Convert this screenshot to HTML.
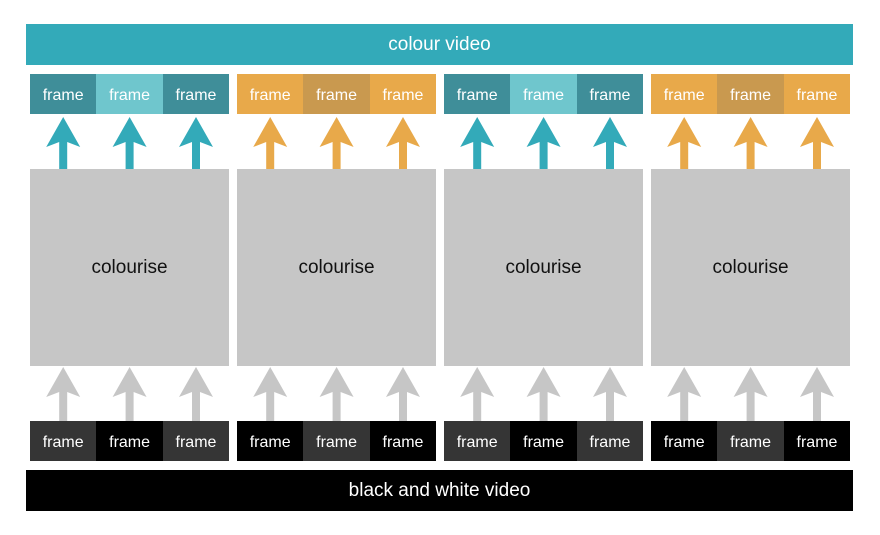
<!DOCTYPE html>
<html><head><style>
*{margin:0;padding:0;box-sizing:border-box}
body{width:880px;height:535px;background:#fff;position:relative;font-family:"Liberation Sans",sans-serif;overflow:hidden}
.bar{position:absolute;left:26px;width:827px;height:41px;color:#fff;font-size:19px;display:flex;align-items:center;justify-content:center}
.f{position:absolute;height:40px;width:66.4px;color:#fff;font-size:16px;display:flex;align-items:center;justify-content:center;padding-top:3px}
.box{position:absolute;top:169px;height:197px;width:199px;background:#c6c6c6;color:#111;font-size:19px;display:flex;align-items:center;justify-content:center}
svg{position:absolute;left:0;top:0}
</style></head><body>
<div class="bar" style="top:24px;background:#33aab9">colour video</div>
<div class="bar" style="top:470px;background:#000">black and white video</div>
<div id="c"></div>
<svg width="880" height="535" id="s"></svg>
<script>
(function(){
var g=[30,237,444,651];
var tc=[["#3f8e99","#6fc6cd","#3f8e99"],["#e8a94a","#c9994f","#e8a94a"],["#3f8e99","#6fc6cd","#3f8e99"],["#e8a94a","#c9994f","#e8a94a"]];
var bc=[["#353535","#000","#353535"],["#000","#353535","#000"],["#353535","#000","#353535"],["#000","#353535","#000"]];
var ac=["#33aab9","#e8a94a","#33aab9","#e8a94a"];
var h="",sv="";
g.forEach(function(x,i){
 for(var j=0;j<3;j++){
  var fx=x+j*66.4;
  h+='<div class="f" style="left:'+fx+'px;top:74px;background:'+tc[i][j]+'">frame</div>';
  h+='<div class="f" style="left:'+fx+'px;top:421px;background:'+bc[i][j]+'">frame</div>';
  var cx=fx+33.2;
  sv+='<path d="M'+cx+' 117 L'+(cx+17)+' 147 L'+(cx+4)+' 142 L'+(cx+4)+' 169 L'+(cx-4)+' 169 L'+(cx-4)+' 142 L'+(cx-17)+' 147Z" fill="'+ac[i]+'"/>';
  sv+='<path d="M'+cx+' 367 L'+(cx+17)+' 397 L'+(cx+4)+' 392 L'+(cx+4)+' 421 L'+(cx-4)+' 421 L'+(cx-4)+' 392 L'+(cx-17)+' 397Z" fill="#c6c6c6"/>';
 }
 h+='<div class="box" style="left:'+x+'px">colourise</div>';
});
document.getElementById('c').innerHTML=h;
document.getElementById('s').innerHTML=sv;
})();
</script>
</body></html>
